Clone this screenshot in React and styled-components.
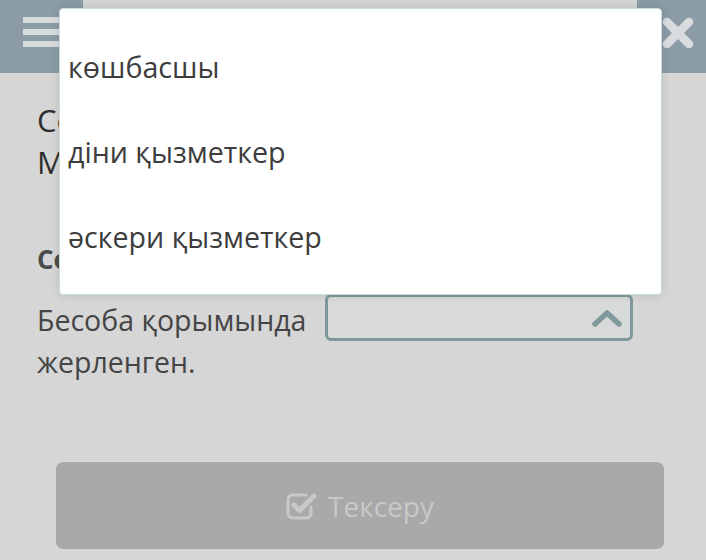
import React from "react";
import styled, { createGlobalStyle } from "styled-components";

const GlobalStyle = createGlobalStyle`
    html, body {
        margin: 0;
        padding: 0;
        background: #d6d6d6;
    }
    body {
        font-family: "Open Sans", "Noto Sans", sans-serif;
    }
`;

const Page = styled.div`
    position: relative;
    width: 706px;
    height: 560px;
    overflow: hidden;
    background: #d6d6d6;
`;

const Header = styled.header`
    display: flex;
    height: 73px;
`;

const SideButton = styled.div`
    display: flex;
    align-items: flex-start;
    justify-content: center;
    box-sizing: border-box;
    width: ${props => props.width}px;
    padding: ${props => props.top}px 0 0 ${props => props.left || 0}px;
    background: #8b9ca7;
    color: #d9dcde;
`;

const TitleBar = styled.div`
    flex: 1;
    background: #d3d5d5;
`;

const Content = styled.main`
    padding: 26px 37px 0 37px;
`;

const Question = styled.h2`
    margin: 0;
    font-size: 31px;
    line-height: 42px;
    font-weight: 400;
    color: #2f2f2f;
    white-space: nowrap;
`;

const Prompt = styled.h3`
    margin: 56px 0 0;
    font-size: 26px;
    line-height: 40px;
    font-weight: 700;
    color: #4a4a4a;
`;

const Row = styled.div`
    display: flex;
    align-items: flex-start;
    margin-top: 15px;
`;

const Sentence = styled.p`
    flex: none;
    margin: 5px 0 0;
    width: 288px;
    font-size: 28.5px;
    line-height: 42px;
    color: #454545;
`;

const Select = styled.div`
    display: flex;
    align-items: center;
    justify-content: flex-end;
    box-sizing: border-box;
    width: 308px;
    height: 47px;
    padding-right: 8px;
    border: 3px solid #7f989b;
    border-radius: 6px;
    background: #d8d9d9;
    color: #7f989b;
`;

const Footer = styled.div`
    padding: 79px 42px 0 56px;
`;

const CheckButton = styled.button`
    display: flex;
    align-items: center;
    justify-content: center;
    gap: 10px;
    width: 100%;
    height: 87px;
    border: none;
    border-radius: 7px;
    background: #a9a9a9;
    color: #c8c8c8;
    font-family: "Open Sans", "Noto Sans", sans-serif;
    font-size: 28px;
`;

const Menu = styled.ul`
    position: absolute;
    left: 59px;
    top: 8px;
    box-sizing: border-box;
    width: 603px;
    height: 287px;
    margin: 0;
    padding: 15px 8px 0;
    list-style: none;
    background: #ffffff;
    border: 1px solid #c9dcdc;
    border-radius: 4px;
    box-shadow: 0 0 10px rgba(0, 0, 0, 0.12);
`;

const MenuItem = styled.li`
    height: 85px;
    line-height: 85px;
    font-size: 28.6px;
    color: #3d3d3d;
`;

const Hamburger = () => (
    <svg width="38" height="30" viewBox="0 0 38 30">
        <rect x="0" y="0" width="38" height="6" fill="currentColor" />
        <rect x="0" y="12" width="38" height="6" fill="currentColor" />
        <rect x="0" y="24" width="38" height="6" fill="currentColor" />
    </svg>
);

const CloseIcon = () => (
    <svg width="32" height="32" viewBox="0 0 32 32">
        <path d="M5 5 L27 27 M27 5 L5 27" stroke="currentColor" strokeWidth="8.5" strokeLinecap="round" />
    </svg>
);

const ChevronUp = () => (
    <svg width="30" height="18" viewBox="0 0 30 18">
        <path d="M3 15 L15 4 L27 15" fill="none" stroke="currentColor" strokeWidth="5.5" strokeLinecap="round" strokeLinejoin="round" />
    </svg>
);

const CheckSquare = () => (
    <svg width="32" height="28" viewBox="0 0 32 28">
        <path d="M20 3 H7 a5 5 0 0 0 -5 5 v13 a5 5 0 0 0 5 5 h13 a5 5 0 0 0 5 -5 v-6" fill="none" stroke="currentColor" strokeWidth="3.2" strokeLinecap="round" />
        <path d="M8 13 L13.5 18.5 L28 4" fill="none" stroke="currentColor" strokeWidth="5" strokeLinecap="round" strokeLinejoin="round" />
    </svg>
);

const options = ["көшбасшы", "діни қызметкер", "әскери қызметкер"];

const App = () => {
    return (
        <Page>
            <GlobalStyle />
            <Header>
                <SideButton width={83} top={17}><Hamburger /></SideButton>
                <TitleBar />
                <SideButton width={69} top={17} left={13}><CloseIcon /></SideButton>
            </Header>
            <Content>
                <Question>
                    Сөйлемді толықтыр.<br />
                    Мәтінді мұқият оқы.
                </Question>
                <Prompt>Сөйлемді толықтыр</Prompt>
                <Row>
                    <Sentence>Бесоба қорымында жерленген.</Sentence>
                    <Select><ChevronUp /></Select>
                </Row>
            </Content>
            <Footer>
                <CheckButton><CheckSquare /> Тексеру</CheckButton>
            </Footer>
            <Menu>
                {options.map(option => (
                    <MenuItem key={option}>{option}</MenuItem>
                ))}
            </Menu>
        </Page>
    );
};

export default App;
